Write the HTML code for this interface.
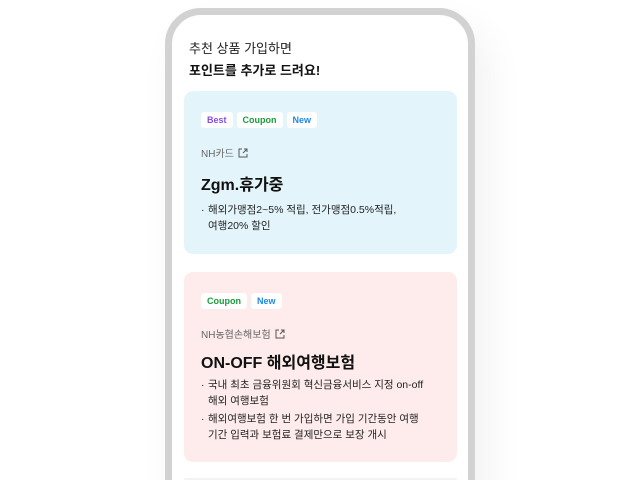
<!DOCTYPE html>
<html style="height:480px;overflow:hidden"><head><meta charset="utf-8"><style>
*{margin:0;padding:0;box-sizing:border-box}
body{width:640px;height:480px;overflow:hidden;background:#fff;font-family:"Liberation Sans","Noto Sans CJK KR",sans-serif;color:#111}
#w{position:relative;width:640px;height:480px;overflow:hidden}
.phone{position:absolute;left:165px;top:8px;width:310px;height:560px;border:7px solid #d2d2d2;border-radius:36px;background:#fff;box-shadow:12px 20px 40px rgba(0,0,0,0.06)}
.h1{position:absolute;left:189px;top:38px;font-size:13px;color:#222}
.h2{position:absolute;left:189px;top:60px;font-size:13px;font-weight:bold;color:#111}
.card{position:absolute;left:184px;width:273px;border-radius:9px}
.tags{position:absolute;left:17px;display:flex;gap:4px}
.tag{background:#fff;border-radius:3px;font-size:9px;font-weight:bold;height:16px;line-height:16px;padding:0 6px}
.co{position:absolute;left:17px;font-size:10px;color:#666}
.co svg{vertical-align:-1px;margin-left:4px}
.ti{position:absolute;left:17px;font-size:16px;font-weight:bold;color:#111}
.bl{position:absolute;left:17px;font-size:10.5px;line-height:16px;color:#222}
.bl div{padding-left:7px;position:relative}
.bl div:before{content:"·";position:absolute;left:0}
</style></head><body><div id="w">
<div class="phone"></div>
<div class="h1">추천 상품 가입하면</div>
<div class="h2">포인트를 추가로 드려요!</div>
<div class="card" style="top:91px;height:163px;background:#e3f5fb">
 <div class="tags" style="top:21px"><span class="tag" style="color:#8a4de6">Best</span><span class="tag" style="color:#1a9c3c">Coupon</span><span class="tag" style="color:#1e88e5">New</span></div>
 <div class="co" style="top:54px">NH카드<svg width="10" height="10" viewBox="0 0 10 10" fill="none" stroke="#555" stroke-width="1"><path d="M4 1H1v8h8V6M6 1h3v3M9 1L5 5"/></svg></div>
 <div class="ti" style="top:80px">Zgm.휴가중</div>
 <div class="bl" style="top:111px"><div>해외가맹점2~5% 적립, 전가맹점0.5%적립,<br>여행20% 할인</div></div>
</div>
<div class="card" style="top:272px;height:190px;background:#fdeceb">
 <div class="tags" style="top:21px"><span class="tag" style="color:#1a9c3c">Coupon</span><span class="tag" style="color:#1e88e5">New</span></div>
 <div class="co" style="top:54px">NH농협손해보험<svg width="10" height="10" viewBox="0 0 10 10" fill="none" stroke="#555" stroke-width="1"><path d="M4 1H1v8h8V6M6 1h3v3M9 1L5 5"/></svg></div>
 <div class="ti" style="top:77px">ON-OFF 해외여행보험</div>
 <div class="bl" style="top:105px"><div>국내 최초 금융위원회 혁신금융서비스 지정 on-off<br>해외 여행보험</div><div style="margin-top:2px">해외여행보험 한 번 가입하면 가입 기간동안 여행<br>기간 입력과 보험료 결제만으로 보장 개시</div></div>
</div>
<div class="card" style="top:478px;height:2px;background:#f3f3f3"></div>
</div></body></html>
